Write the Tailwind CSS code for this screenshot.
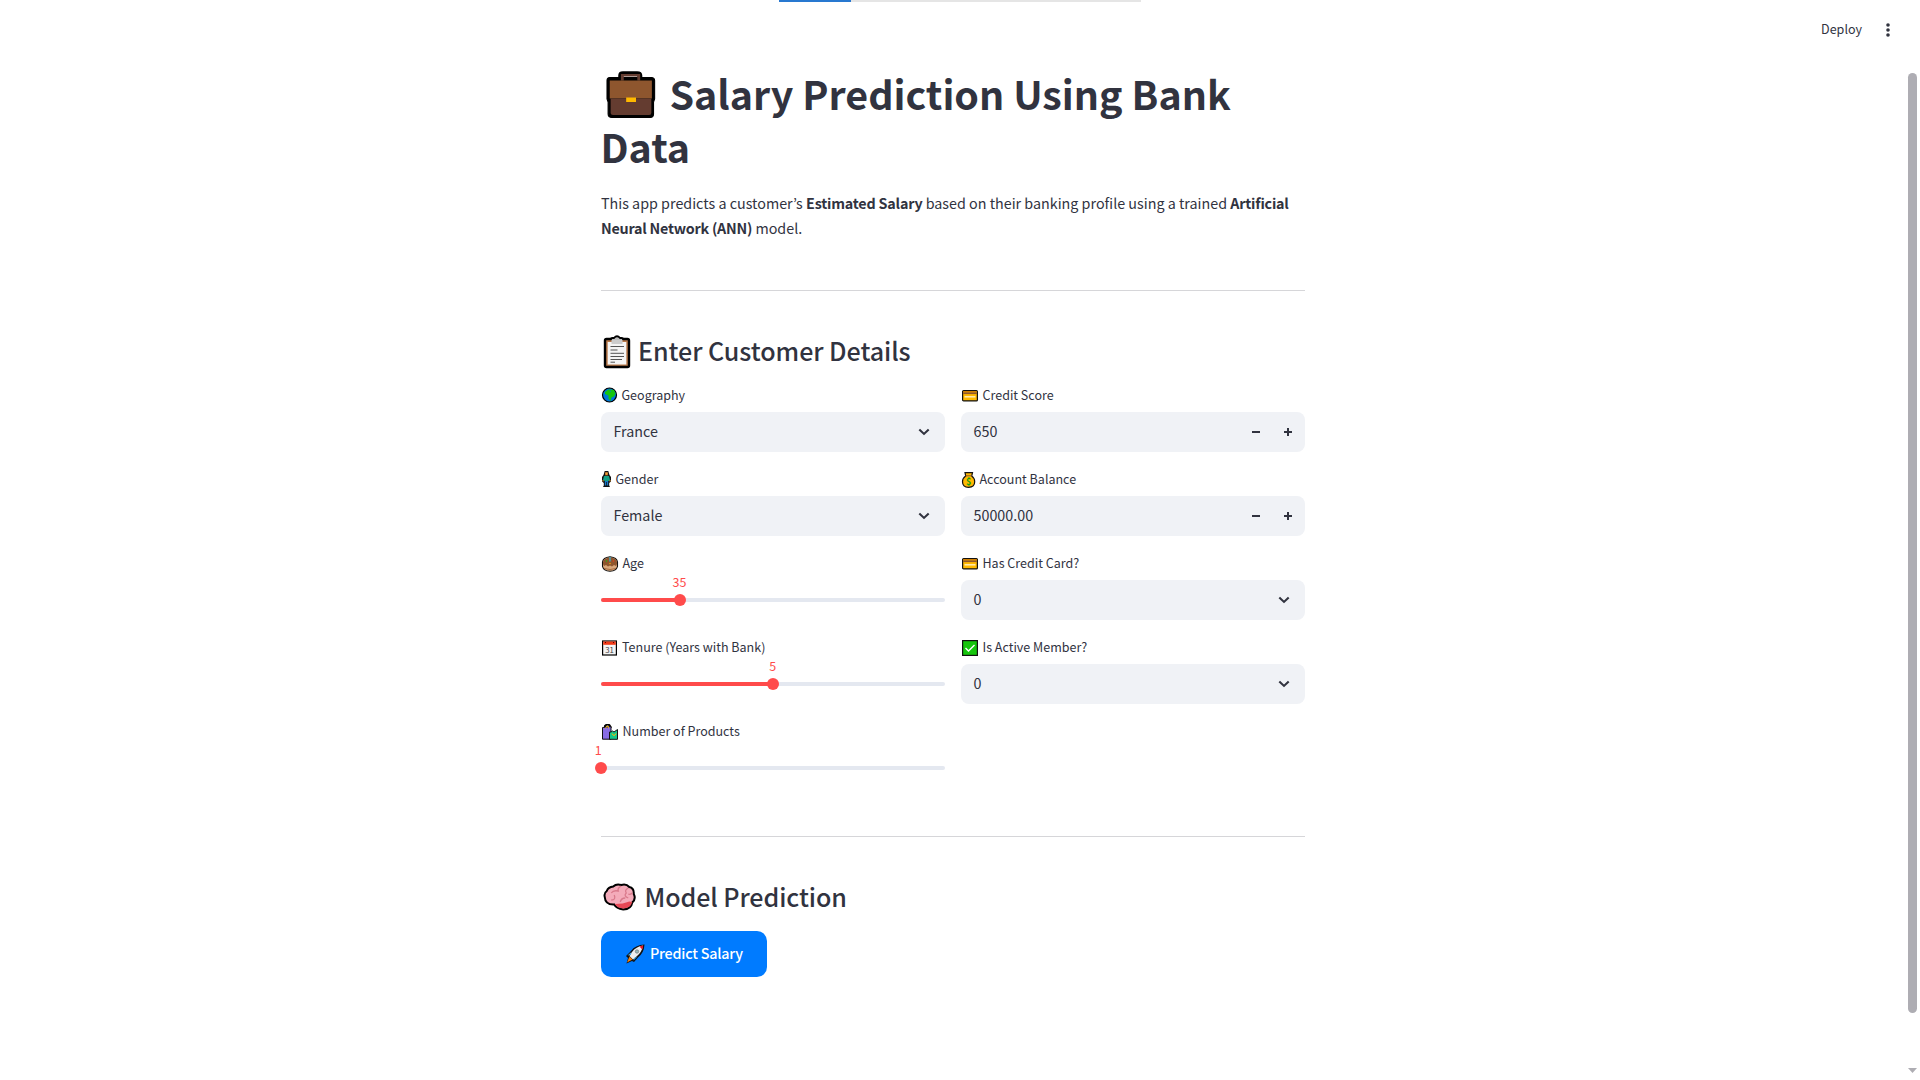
<!DOCTYPE html>
<html lang="en">
<head>
<meta charset="utf-8">
<title>Salary Prediction</title>
<script src="https://cdn.jsdelivr.net/npm/@tailwindcss/browser@4"></script>
</head>
<body class="relative h-screen overflow-hidden bg-white font-['Noto_Sans_CJK_KR','Noto_Sans_CJK_SC',sans-serif] text-[#31333f]">
<svg class="hidden">
  <symbol id="chev" viewBox="0 0 12 8"><path d="M1.3 1.4 6 5.9l4.700-4.500" fill="none" stroke="#31333f" stroke-width="2.1"/></symbol>
  <symbol id="card" viewBox="0 0 16 12"><rect x=".6" y=".6" width="14.800" height="10.300" rx="1" fill="#ffb900" stroke="#111" stroke-width="1.200"/><path d="M1.200 1.200h13.600v1.200H1.200z" fill="#d67d00"/><path d="M1.200 2.400h13.600v1.700H1.200z" fill="#8e562e"/><path d="M2.500 6.800h11" stroke="#fff0c0" stroke-width="1.400"/></symbol>
</svg>

<div class="flex h-[2px] justify-start pl-[779px]"><div class="h-[2px] w-[72px] bg-[#2878d0]"></div><div class="h-[2px] w-[290px] bg-[#e5e5e5]"></div></div>
<header class="flex h-14 items-center justify-end pr-[26px]">
  <span class="mr-[20px] pb-[2px] text-[12.530px] leading-6">Deploy</span>
  <svg class="h-4 w-3" viewBox="0 0 12 16" fill="#31333f"><circle cx="6" cy="3" r="1.800"/><circle cx="6" cy="8" r="1.800"/><circle cx="6" cy="13" r="1.800"/></svg>
</header>

<main class="ml-[601px] w-[704px] pt-[8px]">
  <h1 class="text-[39.400px] font-bold leading-[53px]">
    <span class="flex"><svg class="-mr-[7px] mt-[5px] h-[48px] w-[75.500px] shrink-0" viewBox="0 0 69 48" preserveAspectRatio="none"><path d="M18 8V4.500Q18 2.500 20 2.500H33Q35.500 2.500 35.500 4.500V8" fill="none" stroke="#000" stroke-width="4.500"/><path d="M8 6.500H46Q49 6.500 49 9.500V28L48 31V43Q48 46.500 45 46.500H10Q6.500 46.500 6.500 43V31L5.500 28V9.500Q5.500 6.500 8 6.500Z" fill="#000" stroke="#000" stroke-width="1"/><path d="M19.500 9.500V4.300H34.500V9.500" fill="none" stroke="#643c30" stroke-width="2.600"/><path d="M8 9.500H46.500V27.500H8z" fill="#8e562e"/><path d="M8.800 27.500H46V42Q46 44 44 44H11Q8.800 44 8.800 42z" fill="#643c30"/><path d="M23 26.500h9V31H23z" fill="#ffb900"/></svg><span>Salary Prediction Using Bank</span></span>
    <span class="-ml-[0.500px] block">Data</span>
  </h1>
  <p class="mt-[18px] text-[14.320px] leading-[25.200px]"><span class="whitespace-nowrap">This app predicts a customer’s <strong class="font-semibold tracking-[-0.190px]">Estimated Salary</strong> based on their banking profile using a trained <strong class="font-semibold tracking-[-0.190px]">Artificial</strong></span><br><strong class="font-semibold tracking-[-0.230px]">Neural Network (ANN)</strong> model.</p>
  <hr class="mt-[49.600px] border-0 border-t border-[#d6d6d9]">

  <h3 class="mt-[42px] flex h-10 items-center text-[25.070px] font-medium leading-10 tracking-[-0.050px]"><svg class="-mt-[2px] h-[34px] w-[37px] shrink-0" viewBox="0 0 37 34"><rect x="4" y="4" width="24" height="28" rx="1.500" fill="#b97a4b" stroke="#000" stroke-width="2.400"/><path d="M6.700 7h18.600v22.500H6.700z" fill="#f4f4f4"/><path d="M10 5V4q0-1 1.500-1H13q3-3.500 6 0h1.500Q22 3 22 4v1" fill="#bbb" stroke="#000" stroke-width="1.800"/><path d="M10.500 5h11v4h-11z" fill="#ccc"/><path d="M9.500 11.500h13.500M9.500 15h7M9.500 18.300h13.500M9.500 21.500h13.500M9.500 24.500h11.500M9.500 27.200h4.500" stroke="#555" stroke-width="1"/></svg><span class="pb-1.5">Enter Customer Details</span></h3>

  <div class="mt-[11px] grid grid-cols-2 gap-4 [&_span]:pb-[2px]">
    <div class="flex flex-col gap-4">
      <div class="h-[68px]">
        <div class="mb-1 flex h-6 items-center gap-[0.500px] text-[12.530px]"><svg class="-mt-[2px] h-4 w-[20px]" viewBox="0 0 20 16"><circle cx="8.500" cy="8" r="7" fill="#0078d7" stroke="#000" stroke-width="1.200"/><path d="M4 5 7.500 2.500 13 3l1.500 3.500-1.500 3-2.500 1-1 3.500-2-2.500V8.500L4 7z" fill="#16c60c"/><path d="m8.500 3.500 2 .5-1.500 1z" fill="#0078d7"/></svg><span>Geography</span></div>
        <div class="flex h-10 items-center justify-between rounded-lg bg-[#f0f2f6] pl-[12.500px] pr-[15px] text-[14.320px]"><span>France</span><svg class="h-2 w-3"><use href="#chev"/></svg></div>
      </div>
      <div class="h-[68px]">
        <div class="mb-1 flex h-6 items-center gap-[0.500px] text-[12.530px]"><svg class="-mt-[2px] h-4 w-[14px]" viewBox="0 0 14 16"><path d="M3.700 0h3.600l1.200 4L10 6v4.500L8.200 12v2.500L9 16H2l.8-1.500V12L1 10.500V6l1.500-2z" fill="#111"/><path d="M4 1h3v3.500H4z" fill="#8e562e"/><circle cx="5.500" cy="2.800" r="1.200" fill="#f0a030"/><path d="M3 5h5l1 4-1.300 1h-4L2 9z" fill="#12a084"/><path d="M3.800 10h3.400v4.500H3.800z" fill="#1976c5"/><path d="M5.500 11v4" stroke="#111" stroke-width=".7"/><path d="M1.500 9h1v1.500h-1zm7 0h1v1.500h-1z" fill="#f0a030"/></svg><span>Gender</span></div>
        <div class="flex h-10 items-center justify-between rounded-lg bg-[#f0f2f6] pl-[12.500px] pr-[15px] text-[14.320px]"><span>Female</span><svg class="h-2 w-3"><use href="#chev"/></svg></div>
      </div>
      <div class="h-[68px]">
        <div class="flex h-6 items-center gap-[0.500px] text-[12.530px]"><svg class="-mt-px h-4 w-[21px]" viewBox="0 0 21 16"><path d="M1.500 6Q2 1.500 9 .8 16 1.500 16.500 6V10.500Q15.500 14.800 9 15.300 2.500 14.800 1.500 10.500z" fill="#d9a87c" stroke="#111" stroke-width="1.100"/><path d="M2 6Q3 2 9 1.800 15.500 2 16 6V8l-1 2-2-1L11 10.500 9 9.500l-2 1L5 9l-2 1-1-2z" fill="#8e562e"/><path d="M9 1v4.500" stroke="#3fb6d8" stroke-width="1.200"/><circle cx="5.500" cy="5" r=".7" fill="#16c60c"/><circle cx="12.500" cy="5" r=".7" fill="#f03a17"/><circle cx="9" cy="7.500" r=".7" fill="#ffb900"/><path d="M3 12.500q6 2 12 0" stroke="#a56a40" fill="none"/></svg><span>Age</span></div>
        <div class="relative mt-[22px] h-1 w-full rounded bg-[#e4e8f0]"><div class="h-1 rounded bg-[#ff4b4b]" style="width:22.900%"></div><div class="absolute top-[-4px] h-3 w-3 -translate-x-1/2 rounded-full bg-[#ff4b4b]" style="left:22.900%"></div><div class="absolute bottom-[10px] -translate-x-1/2 text-[12.530px] leading-5 text-[#ff4b4b]" style="left:22.800%">35</div></div>
      </div>
      <div class="h-[68px]">
        <div class="flex h-6 items-center text-[12.530px]"><svg class="-mt-px h-4 w-[21px]" viewBox="0 0 21 16"><rect x="1.600" y="1" width="13.800" height="14" fill="#f4f4f4" stroke="#000" stroke-width="1.200"/><path d="M2.200 1.500h12.600v3.300H2.200z" fill="#f03a17"/><path d="M4 2.500h1m7 0h1" stroke="#600"/><text x="8.500" y="12.600" text-anchor="middle" font-size="7.800" fill="#444">31</text></svg><span>Tenure (Years with Bank)</span></div>
        <div class="relative mt-[22px] h-1 w-full rounded bg-[#e4e8f0]"><div class="h-1 rounded bg-[#ff4b4b]" style="width:50%"></div><div class="absolute top-[-4px] h-3 w-3 -translate-x-1/2 rounded-full bg-[#ff4b4b]" style="left:50%"></div><div class="absolute bottom-[10px] -translate-x-1/2 text-[12.530px] leading-5 text-[#ff4b4b]" style="left:49.900%">5</div></div>
      </div>
      <div class="h-[68px]">
        <div class="flex h-6 items-center gap-[0.500px] text-[12.530px]"><svg class="-mt-px h-4 w-[21px]" viewBox="0 0 21 16"><path d="M4 4V2q3-3 5 0l1 2" fill="none" stroke="#000" stroke-width="2"/><path d="M1.500 3.500 10 2.500v12.700H1.500z" fill="#886ce4" stroke="#111"/><path d="M4.500 4.500Q5 1 7.500 2.500v2" fill="none" stroke="#ffb900" stroke-width=".8"/><path d="M8.500 8h1.500l1.500-1 1.500 1 3.500-2.500v9.800h-8z" fill="#16c68a" stroke="#111"/><path d="M11 9.500q2 4 4 0" fill="none" stroke="#ffb900"/></svg><span>Number of Products</span></div>
        <div class="relative mt-[22px] h-1 w-full rounded bg-[#e4e8f0]"><div class="absolute top-[-4px] h-3 w-3 -translate-x-1/2 rounded-full bg-[#ff4b4b]" style="left:0"></div><div class="absolute bottom-[10px] -translate-x-1/2 text-[12.530px] leading-5 text-[#ff4b4b]" style="left:-.800%">1</div></div>
      </div>
    </div>
    <div class="flex flex-col gap-4">
      <div class="h-[68px]">
        <div class="mb-1 flex h-6 items-center gap-[0.500px] text-[12.530px]"><svg class="ml-px mr-1 h-3 w-4"><use href="#card"/></svg><span>Credit Score</span></div>
        <div class="flex h-10 items-center rounded-lg bg-[#f0f2f6] pl-[12.500px] text-[14.320px]"><span class="flex-1">650</span><svg class="mr-6 h-2 w-2" viewBox="0 0 8 8"><path d="M0 3h8v2H0z" fill="#31333f"/></svg><svg class="mr-[13px] h-2 w-2" viewBox="0 0 8 8"><path d="M0 3h3V0h2v3h3v2H5v3H3V5H0z" fill="#31333f"/></svg></div>
      </div>
      <div class="h-[68px]">
        <div class="mb-1 flex h-6 items-center gap-[0.500px] text-[12.530px]"><svg class="-mt-px h-4 w-[18px]" viewBox="0 0 18 16"><path d="M4 .7h7.500L10.700 4q3 2 3 5.800Q13.700 15.300 7.600 15.300 1.500 15.300 1.500 9.800 1.500 6 4.700 4z" fill="#ffb900" stroke="#111" stroke-width="1.200"/><path d="M4.700 3.800h6" stroke="#8e562e"/><text x="7.600" y="13.200" text-anchor="middle" font-size="9" font-weight="bold" fill="#13a10e">$</text></svg><span>Account Balance</span></div>
        <div class="flex h-10 items-center rounded-lg bg-[#f0f2f6] pl-[12.500px] text-[14.320px]"><span class="flex-1">50000.00</span><svg class="mr-6 h-2 w-2" viewBox="0 0 8 8"><path d="M0 3h8v2H0z" fill="#31333f"/></svg><svg class="mr-[13px] h-2 w-2" viewBox="0 0 8 8"><path d="M0 3h3V0h2v3h3v2H5v3H3V5H0z" fill="#31333f"/></svg></div>
      </div>
      <div class="h-[68px]">
        <div class="mb-1 flex h-6 items-center gap-[0.500px] text-[12.530px]"><svg class="ml-px mr-1 h-3 w-4"><use href="#card"/></svg><span>Has Credit Card?</span></div>
        <div class="flex h-10 items-center justify-between rounded-lg bg-[#f0f2f6] pl-[12.500px] pr-[15px] text-[14.320px]"><span>0</span><svg class="h-2 w-3"><use href="#chev"/></svg></div>
      </div>
      <div class="h-[68px]">
        <div class="mb-1 flex h-6 items-center gap-[0.500px] text-[12.530px]"><svg class="-mt-px h-4 w-[21px]" viewBox="0 0 21 16"><rect x="1.600" y=".6" width="14.800" height="14.800" fill="#16c60c" stroke="#111" stroke-width="1.200"/><path d="m4.500 8 3 3 6-6" fill="none" stroke="#fff" stroke-width="1.400"/></svg><span>Is Active Member?</span></div>
        <div class="flex h-10 items-center justify-between rounded-lg bg-[#f0f2f6] pl-[12.500px] pr-[15px] text-[14.320px]"><span>0</span><svg class="h-2 w-3"><use href="#chev"/></svg></div>
      </div>
    </div>
  </div>

  <hr class="mt-12 border-0 border-t border-[#d6d6d9]">
  <h3 class="mt-[42px] flex h-10 items-center text-[25.070px] font-medium leading-10 tracking-[-0.080px]"><svg class="-mt-1 h-[28px] w-[43.500px] shrink-0" viewBox="0 0 43 28"><path d="M12 3.500Q15 .5 20 2 25 .5 28 4 33 5 32.500 11 35 16 31 19.500 30 26 22 26.500 15 25.500 13 21.500 4 22 3.500 14 2.500 10 5.500 8 7 4 12 3.500Z" fill="#f4abba" stroke="#000" stroke-width="2"/><path d="M13.500 21Q22 21 28 18.500L31 19Q29.500 25 22 25.500 16 25 13.500 21Z" fill="#e74856"/><path d="M20 3q-4 2-3 5-5-1-7 2M10 17q5 0 3-5M27 5q-4 2-2 5-3 3 2 5M19 19q1-4 5-4M31 10q-2 2-4 1" fill="none" stroke="#d97a8c" stroke-width="1.300"/></svg><span class="pb-1.5">Model Prediction</span></h3>
  <button class="mt-[12px] flex h-[46px] w-[166px] items-center rounded-[10px] bg-[#007bff] pl-6 text-[14.320px] font-medium tracking-[-0.200px] text-white"><svg class="mr-[5px] h-5 w-5" viewBox="0 0 20 20"><path d="M1 12 6 7q4-6 13.500-6.500Q19 9 13 13.500L9 18l-2-1-5.500 2.500L3 14z" fill="#111"/><path d="M7 8q4-5.500 11-6.500Q17 8 11.500 12.500L8 15.500 4.500 12z" fill="#eee"/><path d="M14.500 2.500 18.300 1.500 17.300 5.500z" fill="#e81224"/><path d="M2.500 11.500 6.500 8 5.800 11zM8.500 16.500 12.500 12.500 9 14z" fill="#3ba7e8"/><path d="M4.500 12.500 7.500 15.500 2 18.500z" fill="#f7820b"/><circle cx="12" cy="7.500" r="1.700" fill="#9bb" stroke="#777" stroke-width=".7"/></svg><span class="pb-[2px]">Predict Salary</span></button>
</main>

<!-- page scrollbar -->
<div class="absolute right-[3px] top-[73px] h-[940px] w-[9px] rounded-full bg-[#aeadb3]"></div>
<svg class="absolute right-[3px] top-[1068px] h-[5px] w-[9px]" viewBox="0 0 9 5"><path d="M0 0h9L4.500 5z" fill="#aeadb3"/></svg>
</body>
</html>
